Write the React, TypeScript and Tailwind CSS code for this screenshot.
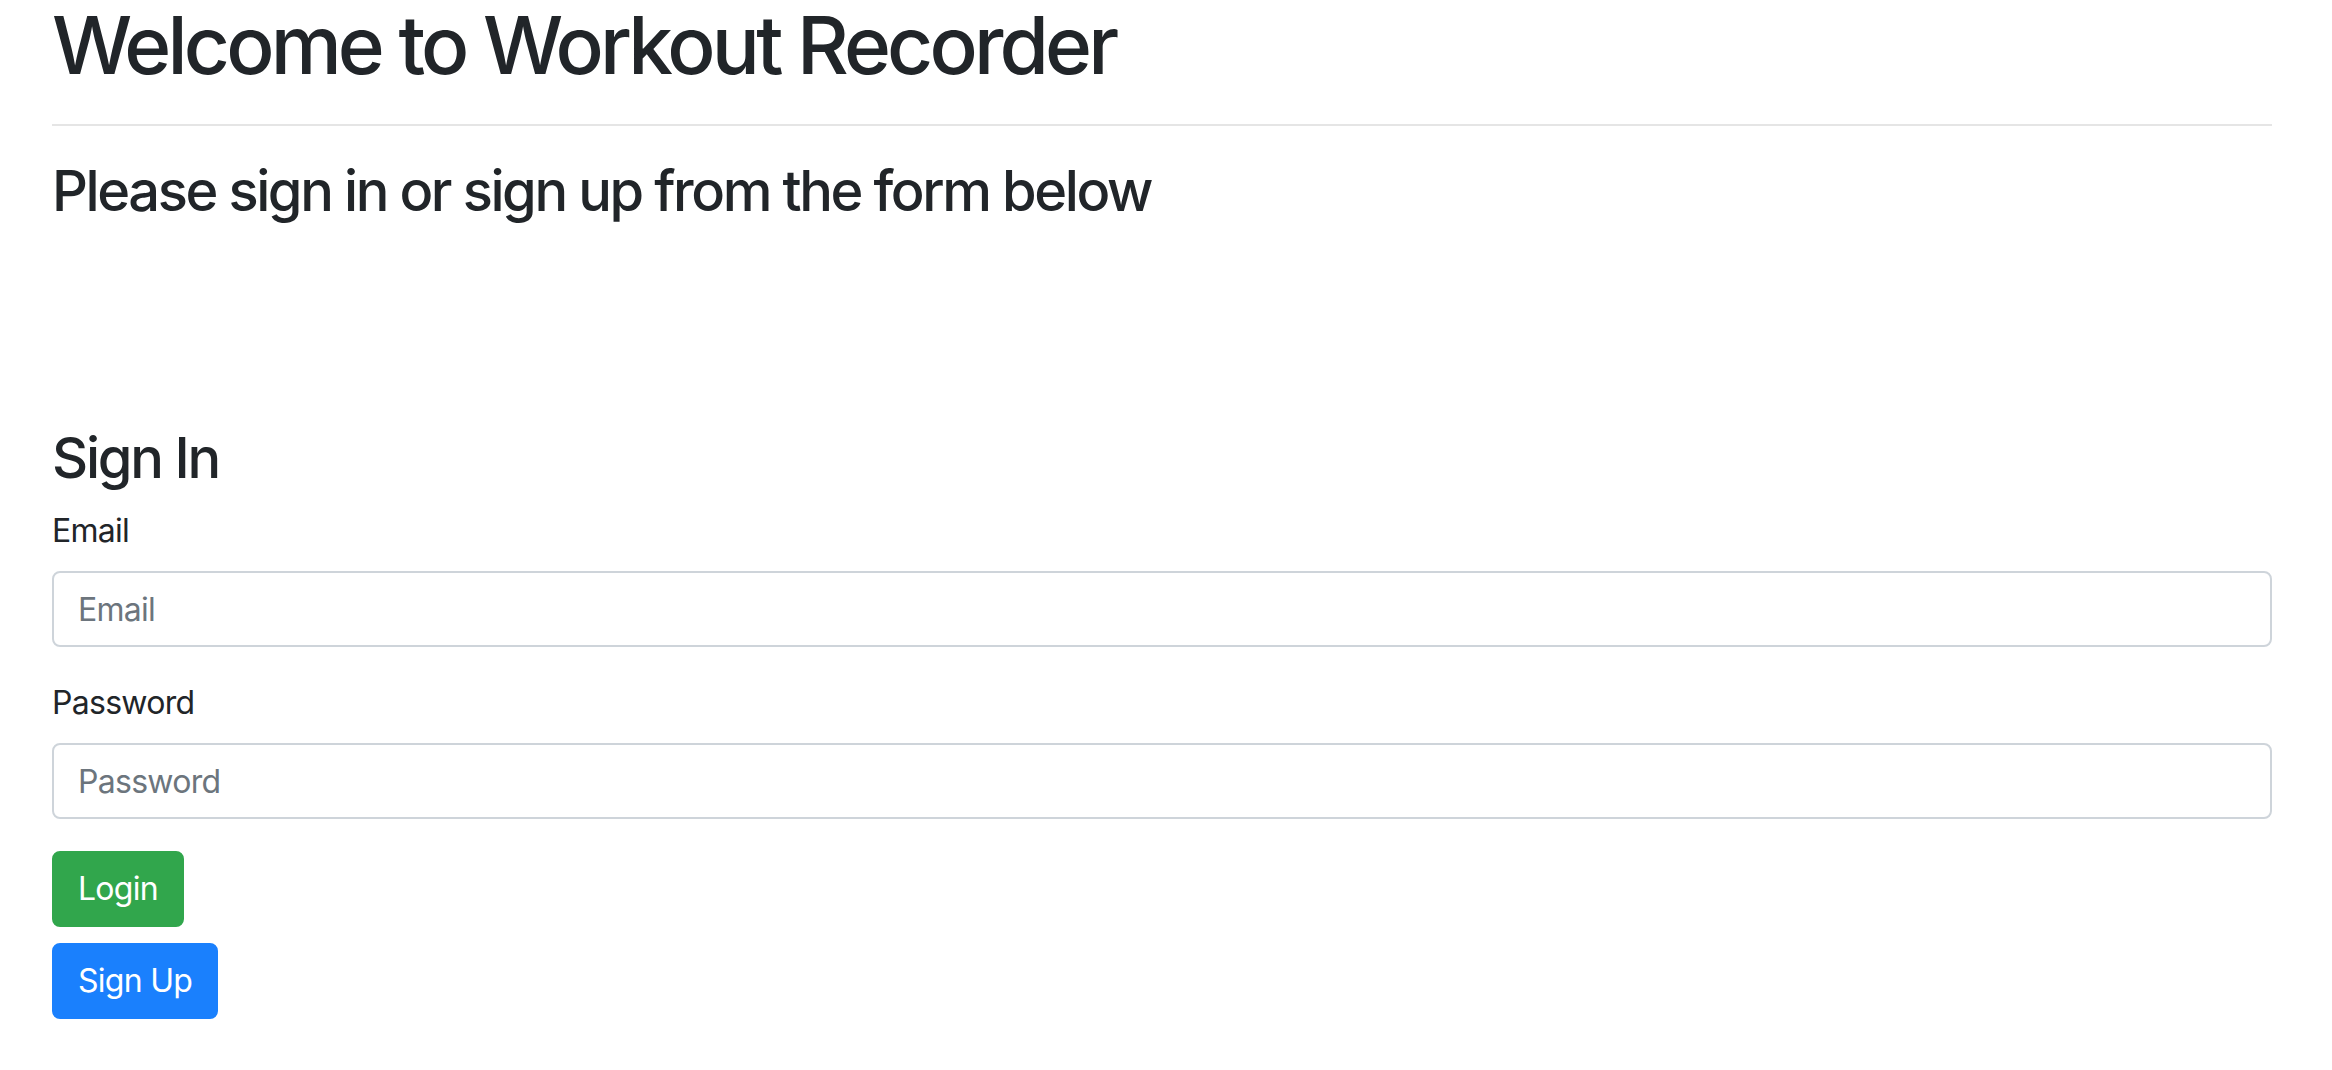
export default function App() {
  return (
    <div className="min-h-screen bg-white pl-[52px] pr-[60px] text-[#212529] font-['Inter','Liberation_Sans',sans-serif] tracking-[-0.045em]">
      <h1 className="-mt-[3px] mb-[31px] text-[80px] font-medium leading-[96px] tracking-[-0.048em]">Welcome to Workout Recorder</h1>
      <hr className="border-0 border-t-2 border-[#e5e5e5]" />
      <h3 className="mt-[32px] text-[56px] font-medium leading-[67px] tracking-[-0.043em]">Please sign in or sign up from the form below</h3>

      <div className="mt-[200px]">
        <h3 className="mb-[15px] text-[56px] font-medium leading-[67px] tracking-[-0.04em]">Sign In</h3>
        <form onSubmit={(e) => e.preventDefault()}>
          <div className="mb-[32px]">
            <label className="mb-[16px] block text-[32px] leading-[48px]">Email</label>
            <input
              type="email"
              placeholder="Email"
              className="block h-[76px] w-full rounded-[8px] border-2 border-[#ced4da] px-[24px] text-[32px] text-[#495057] outline-none placeholder:text-[#6c757d]"
            />
          </div>
          <div className="mb-[32px]">
            <label className="mb-[16px] block text-[32px] leading-[48px]">Password</label>
            <input
              type="password"
              placeholder="Password"
              className="block h-[76px] w-full rounded-[8px] border-2 border-[#ced4da] px-[24px] text-[32px] text-[#495057] outline-none placeholder:text-[#6c757d]"
            />
          </div>
          <div className="flex flex-col items-start gap-[16px]">
            <button className="h-[76px] rounded-[8px] border-2 border-[#31a64c] bg-[#31a64c] px-[24px] text-[32px] leading-[48px] text-white">
              Login
            </button>
            <button type="button" className="h-[76px] rounded-[8px] border-2 border-[#1a80fd] bg-[#1a80fd] px-[24px] text-[32px] leading-[48px] text-white">
              Sign Up
            </button>
          </div>
        </form>
      </div>
    </div>
  );
}
